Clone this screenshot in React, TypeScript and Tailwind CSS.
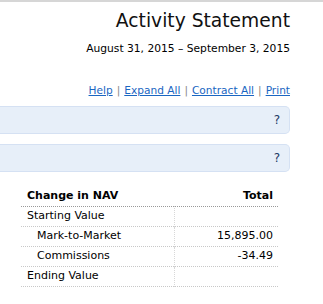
const rows = [
  { label: 'Starting Value', value: '', indent: false },
  { label: 'Mark-to-Market', value: '15,895.00', indent: true },
  { label: 'Commissions', value: '-34.49', indent: true },
  { label: 'Ending Value', value: '', indent: false },
];

const Panel = () => (
  <div className="flex h-[28px] w-[290px] items-center justify-end rounded-r-[5px] border border-l-0 border-[#d5e1f3] bg-[#e7eff9] pr-[9px]">
    <span className="text-[12px] text-[#1d3763]">?</span>
  </div>
);

export default function App() {
  return (
    <div className="h-[304px] w-[323px] overflow-hidden border-t-2 border-[#d6d6d6] bg-white font-['DejaVu_Sans',sans-serif] text-black">
      <div className="flex w-[290px] flex-col items-end">
        <h1 className="mt-[7px] text-[18.7px] leading-[24px] text-[#111]">Activity Statement</h1>
        <p className="mt-[9px] text-[10.7px] leading-[14px]">August 31, 2015 – September 3, 2015</p>
        <div className="mt-[27px] flex items-center gap-[4px] text-[10.6px] leading-[14px] text-[#888]">
          <a className="text-[#1a66c2] underline">Help</a>
          <span>|</span>
          <a className="text-[#1a66c2] underline">Expand All</a>
          <span>|</span>
          <a className="text-[#1a66c2] underline">Contract All</a>
          <span>|</span>
          <a className="text-[#1a66c2] underline">Print</a>
        </div>
      </div>

      <div className="mt-[9px] flex flex-col gap-[10px]">
        <Panel />
        <Panel />
      </div>

      <table className="ml-[21px] mt-[14px] w-[257px] border-collapse text-[11px]">
        <thead>
          <tr className="border-b border-dotted border-[#999]">
            <th className="h-[20px] pl-[6px] text-left font-bold">Change in NAV</th>
            <th className="h-[20px] pr-[5px] text-right font-bold">Total</th>
          </tr>
        </thead>
        <tbody>
          {rows.map((r) => (
            <tr key={r.label} className="border-b border-dotted border-[#c8c8c8]">
              <td className={`h-[20px] border-r border-dotted border-[#d8d8d8] ${r.indent ? 'pl-[16px]' : 'pl-[6px]'}`}>
                {r.label}
              </td>
              <td className="h-[20px] w-[104px] pr-[5px] text-right">{r.value}</td>
            </tr>
          ))}
        </tbody>
      </table>
    </div>
  );
}
